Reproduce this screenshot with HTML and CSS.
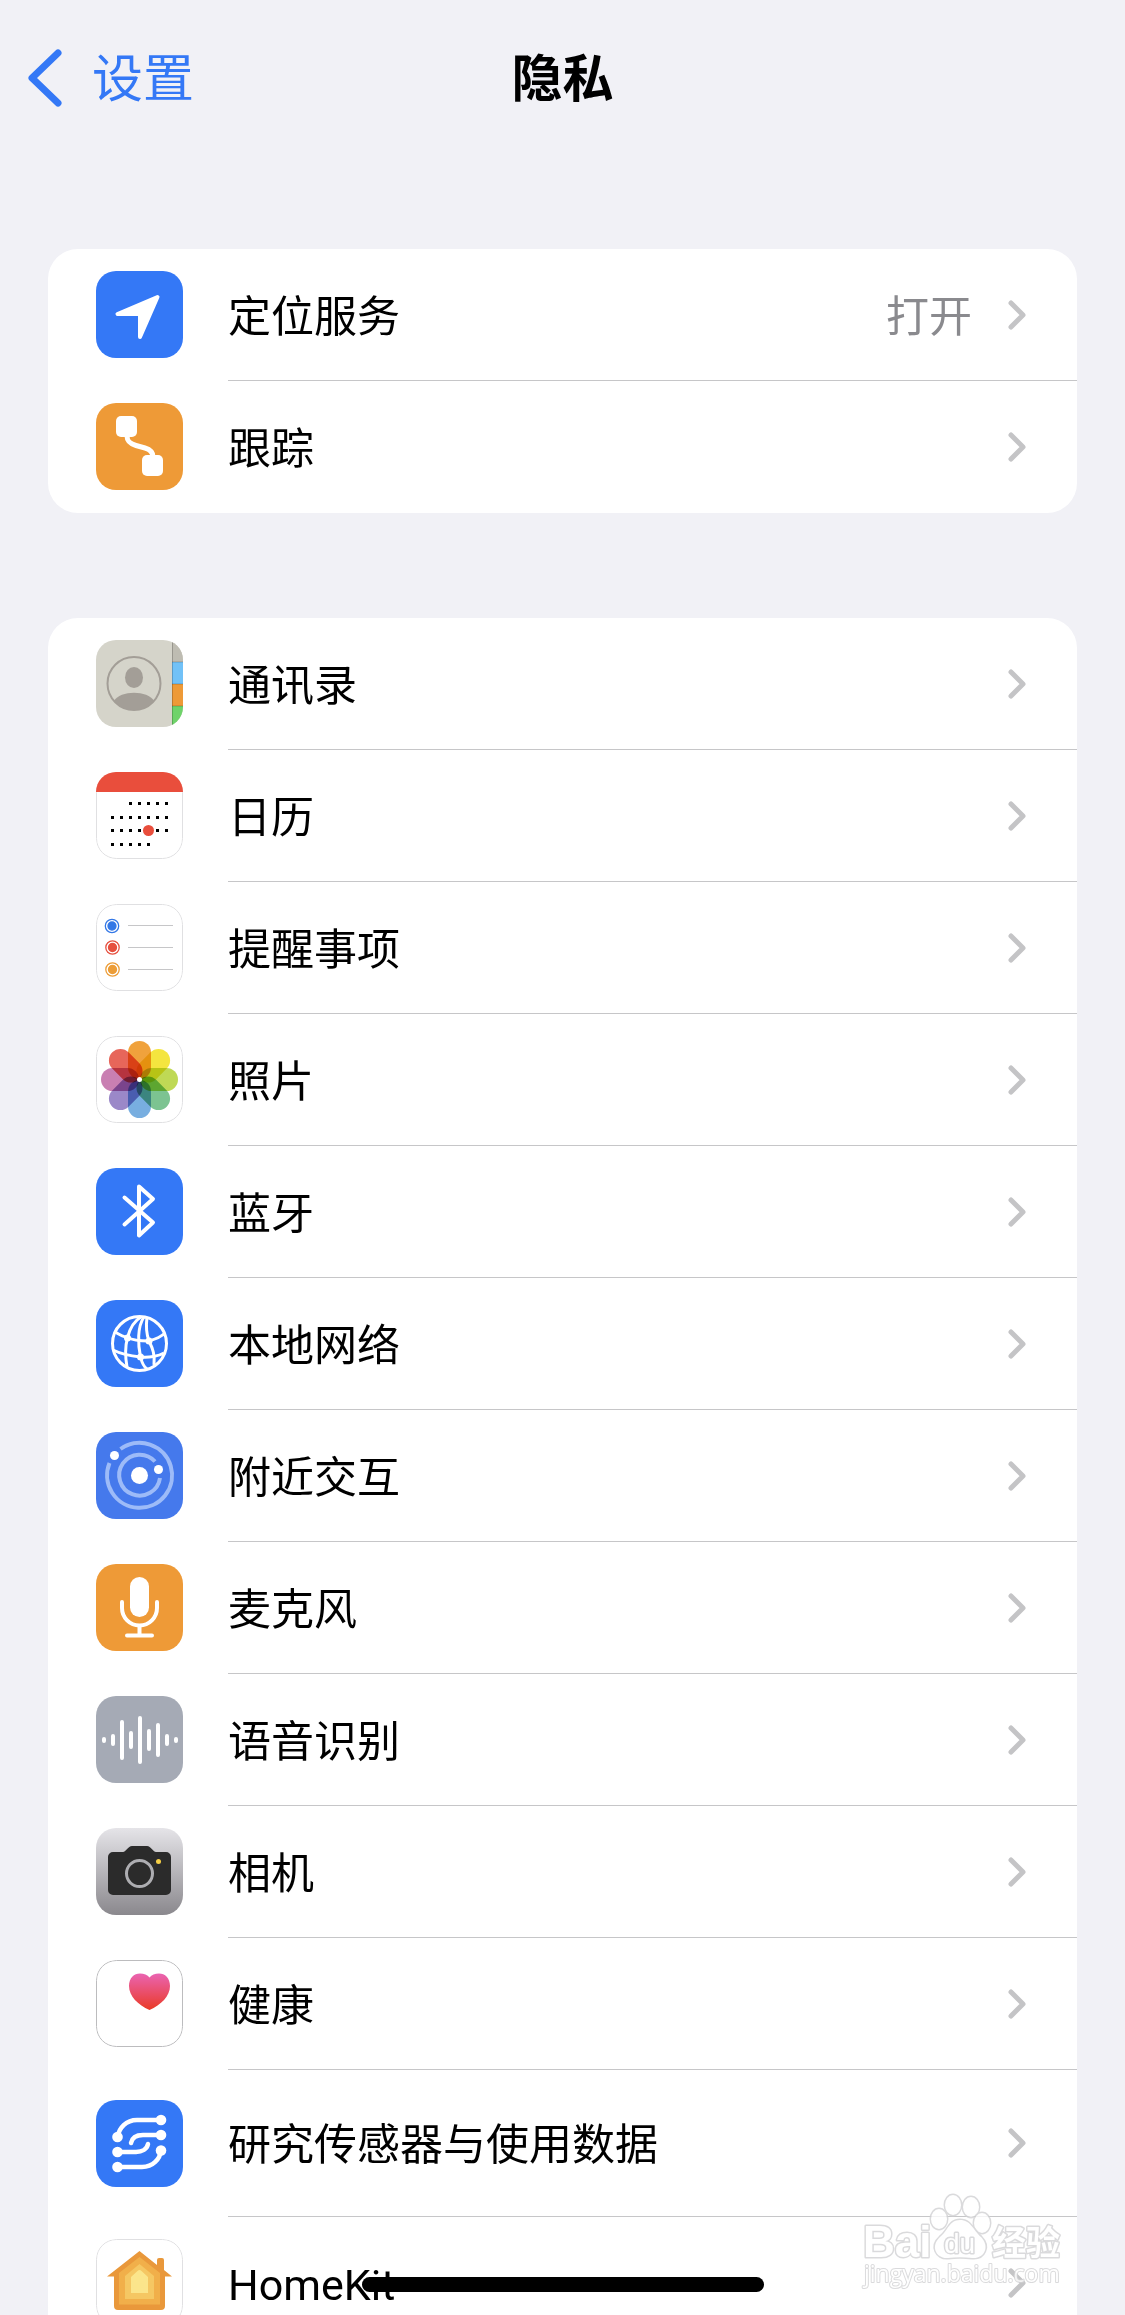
FILE: index.html
```html
<!DOCTYPE html>
<html lang="zh-CN">
<head>
    <meta charset="UTF-8">
    <meta name="viewport" content="width=device-width, initial-scale=1.0">
    <title>隐私</title>
    <link rel="stylesheet" href="styles.css">
</head>
<body>
    <div class="screen">
        <header class="navbar">
            <a class="back" href="#">
                <svg class="back-arrow" viewBox="0 0 34 58" aria-hidden="true"><path d="M30 4L4 29l26 25"/></svg>
                <span class="nav-text">设置</span>
            </a>
            <h1 class="nav-text">隐私</h1>
        </header>

        <main>
            <ul class="group">
                <li>
                    <a class="row" href="#">
                        <svg class="icon" viewBox="0 0 87 87" aria-hidden="true">
                            <rect width="87" height="87" fill="#3478f6"/>
                            <path d="M61.5 26L21.5 43H44v23z" fill="#fff" stroke="#fff" stroke-width="4" stroke-linejoin="round"/>
                        </svg>
                        <span class="body"><span class="label">定位服务</span><span class="value">打开</span><svg class="chevron" viewBox="0 0 18 30" aria-hidden="true"><path d="M3 3l12 12L3 27"/></svg></span>
                    </a>
                </li>
                <li>
                    <a class="row" href="#">
                        <svg class="icon" viewBox="0 0 87 87" aria-hidden="true">
                            <rect width="87" height="87" fill="#ee9a37"/>
                            <rect x="20" y="13" width="21" height="21" rx="5" fill="#fff"/>
                            <rect x="46" y="52" width="21" height="21" rx="5" fill="#fff"/>
                            <path d="M31 33c0 6 4 8 9 9.5l9 2.5c5 1.5 8 4 8 9" fill="none" stroke="#fff" stroke-width="5"/>
                        </svg>
                        <span class="body"><span class="label">跟踪</span><svg class="chevron" viewBox="0 0 18 30" aria-hidden="true"><path d="M3 3l12 12L3 27"/></svg></span>
                    </a>
                </li>
            </ul>

            <ul class="group">
                <li>
                    <a class="row" href="#">
                        <svg class="icon" viewBox="0 0 87 87" aria-hidden="true">
                            <rect width="87" height="87" fill="#d5d4ca"/>
                            <rect x="76" width="11" height="22" fill="#bebcb2"/>
                            <rect x="76" y="22" width="11" height="22" fill="#71c1f7"/>
                            <rect x="76" y="44" width="11" height="22" fill="#ee9a37"/>
                            <rect x="76" y="66" width="11" height="21" fill="#6fd36a"/>
                            <path d="M76.5 0v87M76 22h11M76 44h11M76 66h11" stroke="#000" stroke-opacity=".2" fill="none"/>
                            <circle cx="38" cy="43.5" r="26.5" fill="none" stroke="#a39e97" stroke-width="2"/>
                            <ellipse cx="38" cy="37.5" rx="9" ry="10.5" fill="#a39e97"/>
                            <path d="M18 61C24 50 52 50 58 61A27 27 0 0 1 18 61z" fill="#a39e97"/>
                        </svg>
                        <span class="body"><span class="label">通讯录</span><svg class="chevron" viewBox="0 0 18 30" aria-hidden="true"><path d="M3 3l12 12L3 27"/></svg></span>
                    </a>
                </li>
                <li>
                    <a class="row" href="#">
                        <svg class="icon" viewBox="0 0 87 87" aria-hidden="true">
                            <rect x=".5" y=".5" width="86" height="86" rx="20" fill="#fff" stroke="#e0e0e2"/>
                            <rect width="87" height="20" fill="#e94e3c"/>
                            <path d="M33 31.5h39M15 45.5h57M15 58.5h57M15 72.5h39" stroke="#000" stroke-width="3" stroke-dasharray="3 6"/>
                            <circle cx="52.5" cy="58.5" r="5.5" fill="#e94e3c"/>
                        </svg>
                        <span class="body"><span class="label">日历</span><svg class="chevron" viewBox="0 0 18 30" aria-hidden="true"><path d="M3 3l12 12L3 27"/></svg></span>
                    </a>
                </li>
                <li>
                    <a class="row" href="#">
                        <svg class="icon" viewBox="0 0 87 87" aria-hidden="true">
                            <rect x=".5" y=".5" width="86" height="86" rx="20" fill="#fff" stroke="#e0e0e2"/>
                            <g fill="#3478e6" stroke="#3478e6" stroke-width="1.3"><circle cx="16" cy="22" r="4"/><circle cx="16" cy="22" r="6.7" fill="none"/></g>
                            <g fill="#e6503f" stroke="#e6503f" stroke-width="1.3"><circle cx="16.5" cy="43.5" r="4"/><circle cx="16.5" cy="43.5" r="6.7" fill="none"/></g>
                            <g fill="#ec9d38" stroke="#ec9d38" stroke-width="1.3"><circle cx="16.5" cy="65.5" r="4"/><circle cx="16.5" cy="65.5" r="6.7" fill="none"/></g>
                            <path d="M32 21.5h45M32 43.5h45M32 65.5h45" stroke="#c6c6c8"/>
                        </svg>
                        <span class="body"><span class="label">提醒事项</span><svg class="chevron" viewBox="0 0 18 30" aria-hidden="true"><path d="M3 3l12 12L3 27"/></svg></span>
                    </a>
                </li>
                <li>
                    <a class="row" href="#">
                        <svg class="icon" viewBox="0 0 87 87" aria-hidden="true">
                            <rect x=".5" y=".5" width="86" height="86" rx="20" fill="#fff" stroke="#e0e0e2"/>
                            <g class="petals">
                                <rect x="32" y="5" width="23" height="38" rx="11.5" fill="#f0a23c"/>
                                <rect x="32" y="5" width="23" height="38" rx="11.5" fill="#f4e53f" transform="rotate(45 43.5 43.5)"/>
                                <rect x="32" y="5" width="23" height="38" rx="11.5" fill="#bfd955" transform="rotate(90 43.5 43.5)"/>
                                <rect x="32" y="5" width="23" height="38" rx="11.5" fill="#7cc391" transform="rotate(135 43.5 43.5)"/>
                                <rect x="32" y="5" width="23" height="38" rx="11.5" fill="#78aee0" transform="rotate(180 43.5 43.5)"/>
                                <rect x="32" y="5" width="23" height="38" rx="11.5" fill="#9b88c8" transform="rotate(225 43.5 43.5)"/>
                                <rect x="32" y="5" width="23" height="38" rx="11.5" fill="#c97fb2" transform="rotate(270 43.5 43.5)"/>
                                <rect x="32" y="5" width="23" height="38" rx="11.5" fill="#e7665a" transform="rotate(315 43.5 43.5)"/>
                            </g>
                            <circle cx="43.5" cy="43.5" r="2.5" fill="#fff"/>
                        </svg>
                        <span class="body"><span class="label">照片</span><svg class="chevron" viewBox="0 0 18 30" aria-hidden="true"><path d="M3 3l12 12L3 27"/></svg></span>
                    </a>
                </li>
                <li>
                    <a class="row" href="#">
                        <svg class="icon" viewBox="0 0 87 87" aria-hidden="true">
                            <rect width="87" height="87" fill="#3478f6"/>
                            <path d="M28.5 29.5L57 54.5 43 67.5V18.5L57 31 28.5 56.5" fill="none" stroke="#fff" stroke-width="4" stroke-linejoin="round" stroke-linecap="round"/>
                        </svg>
                        <span class="body"><span class="label">蓝牙</span><svg class="chevron" viewBox="0 0 18 30" aria-hidden="true"><path d="M3 3l12 12L3 27"/></svg></span>
                    </a>
                </li>
                <li>
                    <a class="row" href="#">
                        <svg class="icon" viewBox="0 0 87 87" aria-hidden="true">
                            <rect width="87" height="87" fill="#3478f6"/>
                            <g fill="none" stroke="#fff" stroke-width="3">
                                <circle cx="43.5" cy="43.5" r="27"/>
                                <path d="M45 17C38 21 34 28 31.500 37.5C29 47 29 56 31 67"/>
                                <path d="M48 17C41 27 42 45 44.5 57C46 63 48 67 51 69"/>
                                <path d="M51 17C50 25 50 33 53 41C57 49 59 55 58 65"/>
                                <path d="M19 32C24 35 28 37 31.5 37.5C38 41 46 41 53 41C60 39 65 37 69 33"/>
                                <path d="M17 50C25 54 35 56 44.5 57C53 58 63 56 68 53"/>
                            </g>
                            <g fill="#fff"><circle cx="31.5" cy="38" r="3.5"/><circle cx="53" cy="41" r="3.5"/><circle cx="44.5" cy="57" r="3.5"/></g>
                        </svg>
                        <span class="body"><span class="label">本地网络</span><svg class="chevron" viewBox="0 0 18 30" aria-hidden="true"><path d="M3 3l12 12L3 27"/></svg></span>
                    </a>
                </li>
                <li>
                    <a class="row" href="#">
                        <svg class="icon" viewBox="0 0 87 87" aria-hidden="true">
                            <rect width="87" height="87" fill="#4579ec"/>
                            <g fill="none" stroke="#9dbbf8" stroke-width="4">
                                <path d="M24.5 17A32.5 32.5 0 1 1 13.5 31"/>
                                <path d="M64 46A20.5 20.5 0 1 1 59 29.5"/>
                            </g>
                            <g fill="#fff"><circle cx="43.5" cy="43.5" r="8.5"/><circle cx="18.5" cy="23.5" r="4.5"/><circle cx="62.5" cy="37.5" r="4.5"/></g>
                        </svg>
                        <span class="body"><span class="label">附近交互</span><svg class="chevron" viewBox="0 0 18 30" aria-hidden="true"><path d="M3 3l12 12L3 27"/></svg></span>
                    </a>
                </li>
                <li>
                    <a class="row" href="#">
                        <svg class="icon" viewBox="0 0 87 87" aria-hidden="true">
                            <rect width="87" height="87" fill="#ee9a37"/>
                            <rect x="34" y="13" width="19" height="40" rx="9.5" fill="#fff"/>
                            <path d="M26 38v6a17.5 17.5 0 0 0 35 0v-6M43.5 62v9M31 71.5h25" fill="none" stroke="#fff" stroke-width="4" stroke-linecap="round"/>
                        </svg>
                        <span class="body"><span class="label">麦克风</span><svg class="chevron" viewBox="0 0 18 30" aria-hidden="true"><path d="M3 3l12 12L3 27"/></svg></span>
                    </a>
                </li>
                <li>
                    <a class="row" href="#">
                        <svg class="icon" viewBox="0 0 87 87" aria-hidden="true">
                            <rect width="87" height="87" fill="#a5aab5"/>
                            <path d="M8 43v2M17 40v8M26 26v36M35 37v14M44 22v44M53 35v18M62 29v30M71 40v8M80 43v2" stroke="#fff" stroke-width="4" stroke-linecap="round"/>
                        </svg>
                        <span class="body"><span class="label">语音识别</span><svg class="chevron" viewBox="0 0 18 30" aria-hidden="true"><path d="M3 3l12 12L3 27"/></svg></span>
                    </a>
                </li>
                <li>
                    <a class="row" href="#">
                        <svg class="icon" viewBox="0 0 87 87" aria-hidden="true">
                            <defs><linearGradient id="metal" x2="0" y2="1"><stop offset="0" stop-color="#e5e4e8"/><stop offset="1" stop-color="#8a888d"/></linearGradient></defs>
                            <rect width="87" height="87" fill="url(#metal)"/>
                            <path d="M17 24h10c3 0 5-6 9-6h15c4 0 6 6 9 6h10a5 5 0 0 1 5 5v33a5 5 0 0 1-5 5H17a5 5 0 0 1-5-5V29a5 5 0 0 1 5-5z" fill="#2b2b2b"/>
                            <circle cx="43.5" cy="45.5" r="13" fill="none" stroke="#adadb1" stroke-width="3"/>
                            <circle cx="62.5" cy="33.5" r="2.5" fill="#f5cf45"/>
                        </svg>
                        <span class="body"><span class="label">相机</span><svg class="chevron" viewBox="0 0 18 30" aria-hidden="true"><path d="M3 3l12 12L3 27"/></svg></span>
                    </a>
                </li>
                <li>
                    <a class="row" href="#">
                        <svg class="icon" viewBox="0 0 87 87" aria-hidden="true">
                            <defs><linearGradient id="heart" x2="0" y2="1"><stop offset="0" stop-color="#ea64b2"/><stop offset="1" stop-color="#ea3a26"/></linearGradient></defs>
                            <rect x=".5" y=".5" width="86" height="86" rx="20" fill="#fff" stroke="#bcbcbe"/>
                            <path d="M53.5 50C42 45 33 36 33 26C33 18 38 13.5 44 13.5C48 13.5 51.5 15 53.5 17.5C55.5 15 59 13.5 63 13.5C69 13.5 74 18 74 26C74 36 65 45 53.5 50z" fill="url(#heart)"/>
                        </svg>
                        <span class="body"><span class="label">健康</span><svg class="chevron" viewBox="0 0 18 30" aria-hidden="true"><path d="M3 3l12 12L3 27"/></svg></span>
                    </a>
                </li>
                <li>
                    <a class="row row-tall" href="#">
                        <svg class="icon" viewBox="0 0 87 87" aria-hidden="true">
                            <rect width="87" height="87" fill="#3478f6"/>
                            <path d="M65 20H41C30 20 23 28 21.5 37M65 35H47c-7 0-11 3-12 8M21.5 52H40c6 0 11-3 12-8M21.5 67H46C57 67 64 59 65 50.5" fill="none" stroke="#fff" stroke-width="4.5" stroke-linecap="round"/>
                            <g fill="#fff">
                                <circle cx="65" cy="20" r="5.3"/><circle cx="65" cy="35" r="5.3"/><circle cx="65" cy="50.5" r="5.3"/>
                                <circle cx="21.5" cy="37" r="5.3"/><circle cx="21.5" cy="52" r="5.3"/><circle cx="21.5" cy="67" r="5.3"/>
                            </g>
                        </svg>
                        <span class="body"><span class="label">研究传感器与使用数据</span><svg class="chevron" viewBox="0 0 18 30" aria-hidden="true"><path d="M3 3l12 12L3 27"/></svg></span>
                    </a>
                </li>
                <li>
                    <a class="row" href="#">
                        <svg class="icon" viewBox="0 0 87 87" aria-hidden="true">
                            <rect x=".5" y=".5" width="86" height="86" rx="20" fill="#fff" stroke="#e0e0e2"/>
                            <path d="M43.5 12L61 26v-5q0-2 2-2h3q2 0 2 2v10l8 6.5H69V67q0 4-4 4H22q-4 0-4-4V37.5H11z" fill="#e9983b"/>
                            <path d="M43.5 18L64 34v31.5H23V34z" fill="#f1af4a"/>
                            <path d="M43.5 25L58 37v23H29V37z" fill="#f5c763"/>
                            <path d="M43.5 31q1 0 2 1l6.500 6v16H35V38l6.500-6q1-1 2-1z" fill="#fbe58b"/>
                        </svg>
                        <span class="body"><span class="label">HomeKit</span><svg class="chevron" viewBox="0 0 18 30" aria-hidden="true"><path d="M3 3l12 12L3 27"/></svg></span>
                    </a>
                </li>
            </ul>
        </main>

        <!-- 水印 -->
        <svg class="watermark" viewBox="0 0 210 100" role="img" aria-label="Baidu 经验">
            <text x="2" y="64" class="wm-brand">Bai</text>
            <ellipse cx="92" cy="12" rx="8" ry="10"/>
            <ellipse cx="110" cy="14" rx="8" ry="10"/>
            <ellipse cx="78" cy="26" rx="8" ry="10"/>
            <ellipse cx="121" cy="30" rx="8" ry="10"/>
            <path d="M99 27c-11 0-12 11-20 17c-10 9-4 22 8 21c8-1 16-1 24 0c13 1 18-12 9-21c-8-7-10-17-21-17z"/>
            <text x="83" y="60" class="wm-du">du</text>
            <text x="131" y="62" class="wm-cjk">经验</text>
            <text x="3" y="89" class="wm-url">jingyan.baidu.com</text>
        </svg>

        <div class="home-indicator"></div>
    </div>
</body>
</html>
```

FILE: styles.css
```css
* {
    box-sizing: border-box;
}

body {
    margin: 0;
    background-color: #f1f1f6;
    color: #000000;
    font-family: Roboto, "Noto Sans CJK SC", sans-serif;
    font-size: 43px;
    line-height: 60px;
}

a {
    color: inherit;
    text-decoration: none;
}

.screen {
    position: relative;
    height: 100vh;
    overflow: hidden;
}

/* 导航栏 */
.navbar {
    display: grid;
    grid-template-columns: 1fr auto 1fr;
    align-items: center;
    height: 156px;
    padding: 0 28px;
    font-size: 51px;
}
.navbar h1 {
    margin: 0;
    font-size: 51px;
    font-weight: 700;
}
.nav-text {
    padding-top: 4px;
}
.back {
    display: flex;
    align-items: center;
    gap: 30px;
    color: #3478f6;
}
.back-arrow {
    width: 34px;
    height: 58px;
    fill: none;
    stroke: currentColor;
    stroke-width: 7;
    stroke-linecap: round;
    stroke-linejoin: round;
}

/* 设置列表 */
main {
    padding: 93px 48px 0;
}
.group {
    margin: 0 0 105px;
    padding: 0;
    list-style: none;
    background-color: #ffffff;
    border-radius: 30px;
    overflow: hidden;
}
.row {
    display: flex;
    align-items: center;
    gap: 45px;
    height: 132px;
    padding-left: 48px;
}
.row-tall {
    height: 147px;
}
.icon {
    flex: none;
    width: 87px;
    height: 87px;
    margin-bottom: 1px;
    border-radius: 20px;
}
.body {
    flex: 1;
    display: flex;
    align-items: center;
    height: 100%;
    padding-right: 51px;
    border-bottom: 1px solid #c6c6c8;
}
li:last-child .body {
    border-bottom-color: transparent;
}
.label {
    flex: 1;
    padding-top: 4px;
}
.value {
    padding-top: 4px;
    margin-right: 36px;
    color: #8a8a8e;
}
.chevron {
    width: 18px;
    height: 30px;
    fill: none;
    stroke: #c4c4c6;
    stroke-width: 5;
    stroke-linecap: round;
    stroke-linejoin: round;
}

/* 照片图标的花瓣 */
.petals {
    isolation: isolate;
}
.petals rect {
    mix-blend-mode: multiply;
}

/* 水印 */
.watermark {
    position: absolute;
    right: 54px;
    bottom: 22px;
    width: 210px;
    height: 100px;
    fill: #ffffff;
    stroke: #d2d2d4;
    stroke-width: 3;
    stroke-linejoin: round;
    paint-order: stroke;
    opacity: 0.8;
}
.wm-brand {
    font: 700 44px "Liberation Sans", sans-serif;
}
.wm-du {
    font: 400 28px "Liberation Sans", sans-serif;
}
.wm-cjk {
    font: 700 34px "Noto Sans CJK SC", sans-serif;
}
.wm-url {
    font: 400 23px "Open Sans", sans-serif;
    stroke-width: 2;
}

/* 底部横条 */
.home-indicator {
    position: absolute;
    left: 50%;
    bottom: 23px;
    width: 402px;
    height: 15px;
    margin-left: -201px;
    border-radius: 8px;
    background-color: #000000;
}
```
